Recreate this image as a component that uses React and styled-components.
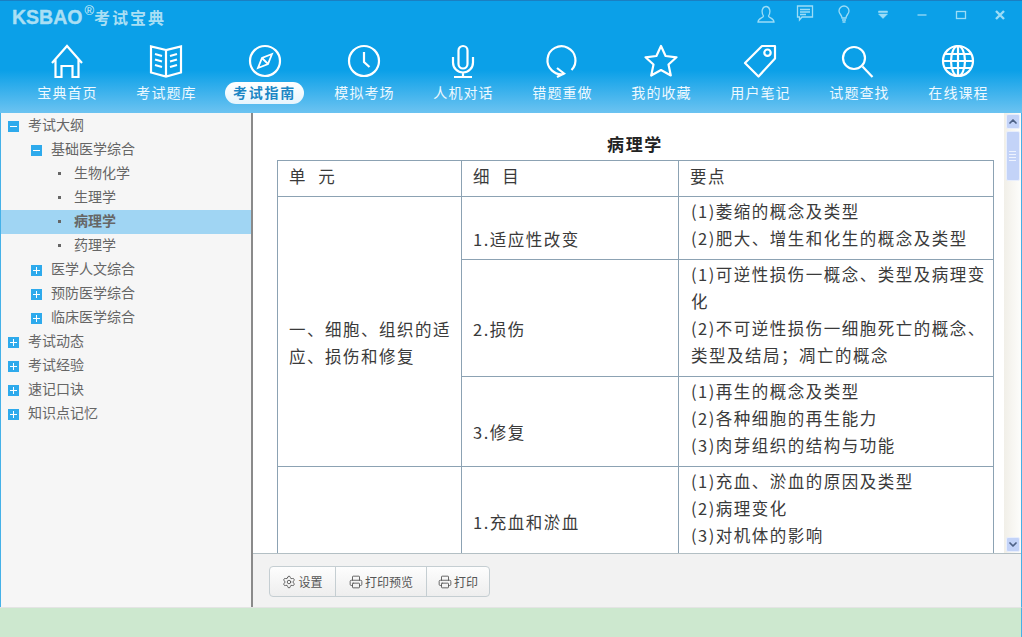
import React from 'react';
import styled, { createGlobalStyle } from 'styled-components';
import { Settings, Printer, ChevronUp, ChevronDown } from 'lucide-react';

const cjk = '"Noto Sans CJK SC", "Noto Sans", sans-serif';

const GlobalStyle = createGlobalStyle`
  html, body {
    margin: 0;
    padding: 0;
    background: #fff;
  }
  #root {
    width: 1022px;
    height: 637px;
    overflow: hidden;
  }
`;

const Window = styled.div`
  width: 1022px;
  height: 637px;
  display: flex;
  flex-direction: column;
  font-family: ${cjk};
`;

const Header = styled.header`
  height: 113px;
  flex: none;
  box-sizing: border-box;
  border-top: 1px solid #1a7fc2;
  background: linear-gradient(#0ba0e8 0, #0ba0e8 62%, #6cc3f1 100%);
`;

const TitleBar = styled.div`
  height: 42px;
  display: flex;
  align-items: flex-start;
  justify-content: space-between;
  padding: 0 3px 0 12px;
`;

const Logo = styled.div`
  display: flex;
  align-items: baseline;
  padding-top: 4px;
  color: #a9dff4;
  font-weight: 700;
`;

const LogoMark = styled.span`
  font-family: "Liberation Sans", Arial, sans-serif;
  font-size: 19.5px;
  line-height: 24px;
  -webkit-text-stroke: 0.4px #a9dff4;
`;

const LogoReg = styled.span`
  align-self: flex-start;
  font-family: "Liberation Sans", Arial, sans-serif;
  font-size: 13px;
  font-weight: 400;
  line-height: 12px;
  margin: 0 0 0 2px;
  color: #d5f0fb;
`;

const LogoName = styled.span`
  font-size: 16px;
  letter-spacing: 2px;
  line-height: 24px;
`;

const WinButtons = styled.div`
  display: flex;
  padding-top: 3px;
`;

const WinButton = styled.div`
  width: 39px;
  height: 20px;
  display: flex;
  justify-content: center;
`;

const WinIcon = styled.svg`
  width: 20px;
  height: 20px;
  fill: none;
  stroke: #9cdcf6;
  stroke-width: 1.3;
`;

const Nav = styled.nav`
  display: grid;
  grid-template-columns: repeat(10, 99px);
  padding-left: 17px;
`;

const NavItem = styled.div`
  display: flex;
  flex-direction: column;
  align-items: center;
`;

const NavIcon = styled.svg`
  width: 36px;
  height: 36px;
  fill: none;
  stroke: #fff;
  stroke-width: 2.2;
`;

const NavLabel = styled.div`
  margin-top: 3px;
  height: 22px;
  line-height: 21px;
  padding: 0 ${p => (p.$active ? '8px' : '7px')} 0 ${p => (p.$active ? '8px' : '9px')};
  font-size: 14px;
  letter-spacing: ${p => (p.$active ? '1.75px' : '1.1px')};
  white-space: nowrap;
  border-radius: 11px;
  color: ${p => (p.$active ? '#1b86c4' : '#eef9ff')};
  background: ${p => (p.$active ? 'linear-gradient(#fff, #e6f5fd)' : 'transparent')};
  font-weight: ${p => (p.$active ? 700 : 400)};
`;

const Body = styled.div`
  flex: 1;
  min-height: 0;
  display: flex;
  border-left: 1px solid #45b1e8;
  border-right: 1px solid #45b1e8;
`;

const Sidebar = styled.aside`
  width: 250px;
  flex: none;
  padding-top: 1px;
  background: #f6f6f6;
  border-right: 2px solid #8a8a8a;
  font-size: 14px;
  color: #666;
`;

const TreeRow = styled.div`
  height: 24px;
  box-sizing: border-box;
  display: flex;
  align-items: center;
  padding: 0 0 4px ${p => p.$indent}px;
  background: ${p => (p.$selected ? '#a0d5f3' : 'transparent')};
  font-weight: ${p => (p.$selected ? 700 : 400)};
  white-space: nowrap;
`;

const Toggle = styled.span`
  position: relative;
  width: 11px;
  height: 11px;
  margin: 4px 9px 0 0;
  flex: none;
  background: #2eaaec;

  &::before {
    content: '';
    position: absolute;
    left: 2px;
    top: 5px;
    width: 7px;
    height: 1px;
    background: #fff;
  }

  &::after {
    content: '';
    display: ${p => (p.$open ? 'none' : 'block')};
    position: absolute;
    left: 5px;
    top: 2px;
    width: 1px;
    height: 7px;
    background: #fff;
  }
`;

const Bullet = styled.span`
  width: 3px;
  height: 3px;
  margin: 2px 13px 0 3px;
  flex: none;
  background: #666;
`;

const Main = styled.main`
  flex: 1;
  min-width: 0;
  display: flex;
  flex-direction: column;
`;

const Viewport = styled.div`
  flex: 1;
  min-height: 0;
  display: flex;
  background: #fff;
`;

const Page = styled.div`
  flex: 1;
  min-width: 0;
  overflow: hidden;
  padding-left: 24px;
`;

const PageTitle = styled.h1`
  width: 716px;
  margin: 20px 0 0;
  height: 27px;
  line-height: 21px;
  text-align: center;
  font-size: 17px;
  letter-spacing: 1.6px;
  font-weight: 700;
  color: #222;
`;

const Table = styled.table`
  width: 716px;
  table-layout: fixed;
  border-collapse: collapse;
  font-size: 16.5px;
  letter-spacing: 1.5px;
  color: #3a3a3a;
`;

const Cell = styled.td`
  border: 1px solid #8ca2b3;
  padding: 22px 4px 0 11px;
  height: ${p => p.$h}px;
  box-sizing: border-box;
  line-height: 27px;
  vertical-align: middle;
`;

const HeadCell = styled(Cell)`
  padding: 0 4px 4px 11px;
  word-spacing: 6px;
`;

const PointsCell = styled(Cell)`
  padding: 0 4px 6px 12px;
`;

const Scrollbar = styled.div`
  width: 17px;
  flex: none;
  display: flex;
  flex-direction: column;
  align-items: center;
  padding: 1px 0;
  box-sizing: border-box;
  background: linear-gradient(90deg, #f1efe8, #fdfdfb);
`;

const ScrollButton = styled.div`
  width: 14px;
  height: 15px;
  flex: none;
  display: flex;
  align-items: center;
  justify-content: center;
  border-radius: 2px;
  background: #c3d3f8;
  border: 1px solid #e8eefc;
  box-sizing: border-box;
  color: #4d6185;
`;

const ScrollThumb = styled.div`
  width: 14px;
  height: 50px;
  margin-top: 2px;
  flex: none;
  display: flex;
  flex-direction: column;
  gap: 2px;
  align-items: center;
  justify-content: center;
  border-radius: 2px;
  background: #c3d3f8;
  border: 1px solid #e8eefc;
  box-sizing: border-box;
`;

const Grip = styled.span`
  width: 7px;
  height: 1px;
  background: #eef3fe;
`;

const ScrollSpacer = styled.div`
  flex: 1;
`;

const Footer = styled.div`
  height: 54px;
  flex: none;
  box-sizing: border-box;
  display: flex;
  align-items: flex-start;
  padding: 12px 0 0 16px;
  background: #f2f2f2;
  border-top: 1px solid #b3bfc4;
`;

const ButtonGroup = styled.div`
  display: flex;
  height: 31px;
  box-sizing: border-box;
  border: 1px solid #c5ced2;
  border-radius: 4px;
  background: linear-gradient(#fdfdfd, #eeeeee);
`;

const ToolButton = styled.div`
  width: ${p => p.$w}px;
  display: flex;
  align-items: center;
  justify-content: center;
  gap: 2px;
  box-sizing: border-box;
  font-size: 12px;
  color: #555;
  & + & {
    border-left: 1px solid #c5ced2;
  }
`;

const StatusBar = styled.div`
  height: 30px;
  flex: none;
  box-sizing: border-box;
  background: #cde8cf;
  border-top: 1px solid #e4e4e4;
  border-right: 1px solid #45b1e8;
`;

const tree = [
  { label: '考试大纲', level: 0, open: true },
  { label: '基础医学综合', level: 1, open: true },
  { label: '生物化学', level: 2 },
  { label: '生理学', level: 2 },
  { label: '病理学', level: 2, selected: true },
  { label: '药理学', level: 2 },
  { label: '医学人文综合', level: 1 },
  { label: '预防医学综合', level: 1 },
  { label: '临床医学综合', level: 1 },
  { label: '考试动态', level: 0 },
  { label: '考试经验', level: 0 },
  { label: '速记口诀', level: 0 },
  { label: '知识点记忆', level: 0 },
];

const navItems = [
  {
    label: '宝典首页',
    icon: <path d="M3 20L18 3L33 20M6.5 16.5V34H12.5V23H23.5V34H29.5V16.5" />,
  },
  {
    label: '考试题库',
    icon: (
      <path d="M18 7L3 3.5V29.5L18 33.5L33 29.5V3.5L18 7ZM18 7V33.5M7 11L14 13M7 16.5L14 18.5M7 22L14 24M29 11L22 13M29 16.5L22 18.5M29 22L22 24" />
    ),
  },
  {
    label: '考试指南',
    active: true,
    icon: (
      <>
        <circle cx="18" cy="18" r="15" />
        <path d="M25 11L21 21L11 25L15 15ZM15 15L21 21" strokeWidth="1.8" />
      </>
    ),
  },
  {
    label: '模拟考场',
    icon: (
      <>
        <circle cx="18" cy="18" r="15" />
        <path d="M18 9V19L23.5 24" />
      </>
    ),
  },
  {
    label: '人机对话',
    icon: (
      <>
        <rect x="13.5" y="3" width="9" height="22.5" rx="4.5" />
        <path d="M8 14V19.5A10 10 0 0 0 28 19.5V14M18 29.5V34M9 34H27" />
      </>
    ),
  },
  {
    label: '错题重做',
    icon: <path d="M20 31A14 14 0 1 1 27.5 27M13 25L20 30.5L13 34" />,
  },
  {
    label: '我的收藏',
    icon: (
      <path
        d="M18 3L22.6 13L33.5 14.3L25.5 21.5L27.8 32.5L18 27L8.2 32.5L10.5 21.5L2.5 14.3L13.4 13Z"
        strokeLinejoin="round"
      />
    ),
  },
  {
    label: '用户笔记',
    icon: (
      <>
        <path d="M20 3H33V15.5L16.5 33.5L3 20Z" strokeLinejoin="round" />
        <circle cx="25.5" cy="9.7" r="3.2" />
      </>
    ),
  },
  {
    label: '试题查找',
    icon: (
      <>
        <circle cx="13" cy="15" r="11" />
        <path d="M21.5 23.5L31.5 34" />
      </>
    ),
  },
  {
    label: '在线课程',
    icon: (
      <>
        <circle cx="18" cy="18" r="15" />
        <ellipse cx="18" cy="18" rx="7" ry="15" />
        <path d="M18 3V33M3 18H33M5 11H31M5 25H31" />
      </>
    ),
  },
];

const rows = [
  {
    height: 63,
    unitSpan: 3,
    unit: '一、细胞、组织的适应、损伤和修复',
    item: '1.适应性改变',
    points: ['(1)萎缩的概念及类型', '(2)肥大、增生和化生的概念及类型'],
  },
  {
    height: 117,
    item: '2.损伤',
    points: ['(1)可逆性损伤一概念、类型及病理变化', '(2)不可逆性损伤一细胞死亡的概念、类型及结局；凋亡的概念'],
  },
  {
    height: 90,
    item: '3.修复',
    points: ['(1)再生的概念及类型', '(2)各种细胞的再生能力', '(3)肉芽组织的结构与功能'],
  },
  {
    height: 90,
    unitSpan: 1,
    unit: '',
    item: '1.充血和淤血',
    points: ['(1)充血、淤血的原因及类型', '(2)病理变化', '(3)对机体的影响'],
  },
];

export default function App() {
  return (
    <Window>
      <GlobalStyle />
      <Header>
        <TitleBar>
          <Logo>
            <LogoMark>KSBAO</LogoMark>
            <LogoReg>®</LogoReg>
            <LogoName>考试宝典</LogoName>
          </Logo>
          <WinButtons>
            <WinButton>
              <WinIcon viewBox="0 0 20 20">
                <path d="M7.5 12C5 8 6 2.5 10 2.5S15 8 12.5 12C12.5 14 18 14 18 18H2C2 14 7.5 14 7.5 12Z" />
              </WinIcon>
            </WinButton>
            <WinButton>
              <WinIcon viewBox="0 0 20 20">
                <path d="M2.5 2H17.5V13H7L4.5 16V13H2.5ZM5 5.5H15M5 8H15M5 10.5H11" />
              </WinIcon>
            </WinButton>
            <WinButton>
              <WinIcon viewBox="0 0 20 20">
                <path d="M8 14C8 11 5 10 5 7A5 5 0 0 1 15 7C15 10 12 11 12 14ZM8 16H12M8.5 18H11.5" />
              </WinIcon>
            </WinButton>
            <WinButton>
              <WinIcon viewBox="0 0 20 20">
                <path d="M5.5 7H14.5V8.5H5.5ZM5.5 10H14.5L10 14.5Z" fill="#9cdcf6" strokeWidth="0.5" />
              </WinIcon>
            </WinButton>
            <WinButton>
              <WinIcon viewBox="0 0 20 20">
                <path d="M5.5 11H14.5" />
              </WinIcon>
            </WinButton>
            <WinButton>
              <WinIcon viewBox="0 0 20 20">
                <rect x="5.5" y="7.5" width="9" height="7" />
              </WinIcon>
            </WinButton>
            <WinButton>
              <WinIcon viewBox="0 0 20 20">
                <path d="M6 7L14 15M14 7L6 15" strokeWidth="2.4" />
              </WinIcon>
            </WinButton>
          </WinButtons>
        </TitleBar>
        <Nav>
          {navItems.map(item => (
            <NavItem key={item.label}>
              <NavIcon viewBox="0 0 36 36">{item.icon}</NavIcon>
              <NavLabel $active={item.active}>{item.label}</NavLabel>
            </NavItem>
          ))}
        </Nav>
      </Header>
      <Body>
        <Sidebar>
          {tree.map(node => (
            <TreeRow
              key={node.label}
              $indent={[7, 30, 54][node.level]}
              $selected={node.selected}
            >
              {node.level < 2 ? <Toggle $open={node.open} /> : <Bullet />}
              {node.label}
            </TreeRow>
          ))}
        </Sidebar>
        <Main>
          <Viewport>
            <Page>
              <PageTitle>病理学</PageTitle>
              <Table>
                <colgroup>
                  <col width="184" />
                  <col width="217" />
                  <col width="315" />
                </colgroup>
                <tbody>
                  <tr>
                    <HeadCell $h={36}>单 元</HeadCell>
                    <HeadCell $h={36}>细 目</HeadCell>
                    <HeadCell $h={36}>要点</HeadCell>
                  </tr>
                  {rows.map(row => (
                    <tr key={row.item}>
                      {row.unitSpan && <Cell rowSpan={row.unitSpan}>{row.unit}</Cell>}
                      <Cell $h={row.height}>{row.item}</Cell>
                      <PointsCell $h={row.height}>
                        {row.points.map(point => (
                          <div key={point}>{point}</div>
                        ))}
                      </PointsCell>
                    </tr>
                  ))}
                </tbody>
              </Table>
            </Page>
            <Scrollbar>
              <ScrollButton>
                <ChevronUp size={13} strokeWidth={3.5} />
              </ScrollButton>
              <ScrollThumb>
                <Grip />
                <Grip />
                <Grip />
                <Grip />
              </ScrollThumb>
              <ScrollSpacer />
              <ScrollButton>
                <ChevronDown size={13} strokeWidth={3.5} />
              </ScrollButton>
            </Scrollbar>
          </Viewport>
          <Footer>
            <ButtonGroup>
              <ToolButton $w={65}>
                <Settings size={14} strokeWidth={1.5} />
                设置
              </ToolButton>
              <ToolButton $w={91}>
                <Printer size={14} strokeWidth={1.5} />
                打印预览
              </ToolButton>
              <ToolButton $w={63}>
                <Printer size={14} strokeWidth={1.5} />
                打印
              </ToolButton>
            </ButtonGroup>
          </Footer>
        </Main>
      </Body>
      <StatusBar />
    </Window>
  );
}
